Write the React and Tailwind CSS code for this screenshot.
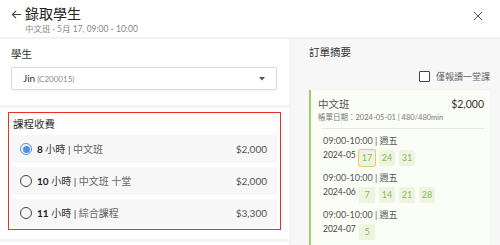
import React from "react";

const F = { fontFamily: "Lato, 'Noto Sans CJK TC', sans-serif" };

function Chip({ n, active }) {
  return (
    <div
      className={
        "w-[16px] h-[16px] flex items-center justify-center text-[9px] text-[#8bb85a] bg-[#edf5e1] rounded-[2px] " +
        (active ? "ring-1 ring-[#f2c46d]" : "")
      }
    >
      {n}
    </div>
  );
}

function Group({ month, days }) {
  return (
    <div className="flex flex-col">
      <div className="text-[9px] text-[#555] leading-[12px]">09:00-10:00 | 週五</div>
      <div className="flex items-start mt-[2px]">
        <div className="w-[36px] text-[8.5px] text-[#444] leading-[12px]">{month}</div>
        <div className="flex gap-[4px] mt-[1px]">
          {days.map((d, i) => (
            <Chip key={d} n={d} active={month === "2024-05" && i === 0} />
          ))}
        </div>
      </div>
    </div>
  );
}

function Option({ hours, name, price, checked }) {
  return (
    <div className="h-[28px] bg-[#f7f7f7] flex items-center px-[8px] rounded-[2px]">
      <div
        className={
          "w-[12px] h-[12px] rounded-full border flex items-center justify-center " +
          (checked ? "border-[#4a90e2]" : "border-[#444]")
        }
      >
        {checked && <div className="w-[7px] h-[7px] rounded-full bg-[#4a90e2]" />}
      </div>
      <div className="ml-[5px] text-[10px] text-[#333]">
        <span className="font-bold text-[#222]">{hours}</span>
        <span> 小時 | </span>
        <span className="text-[#666]">{name}</span>
      </div>
      <div className="ml-auto text-[10px] text-[#555] mr-[2px]">{price}</div>
    </div>
  );
}

export default function App() {
  return (
    <div style={F} className="w-[500px] h-[245px] overflow-hidden bg-white flex flex-col">
      <div className="h-[39px] shrink-0 border-b-[2px] border-[#f2f2f2] flex items-start pl-[11px] pr-[10px] pt-[5px]">
        <svg className="mt-[4px]" width="11" height="11" viewBox="0 0 12 12" fill="none" stroke="#444" strokeWidth="1.2">
          <path d="M11 6H1.5M5.5 2L1.5 6l4 4" />
        </svg>
        <div className="ml-[3px] flex flex-col">
          <div className="text-[14px] leading-[18px] text-[#222]">錄取學生</div>
          <div className="text-[8.5px] leading-[12px] text-[#888]">中文班 · 5月 17, 09:00 - 10:00</div>
        </div>
        <svg className="ml-auto mt-[6px] mr-[7px]" width="10" height="10" viewBox="0 0 10 10" stroke="#555" strokeWidth="1">
          <path d="M1 1l8 8M9 1L1 9" />
        </svg>
      </div>
      <div className="flex flex-1 min-h-0">
        <div className="w-[292px] shrink-0 flex flex-col border-r-[3px] border-[#f4f4f4]">
          <div className="px-[11px] pt-[8px] pb-[15px]">
            <div className="text-[10.5px] text-[#333] leading-[14px]">學生</div>
            <div className="mt-[6px] h-[23px] border border-[#d9d9d9] rounded-[2px] flex items-center px-[11px] shadow-[0_1px_1px_rgba(0,0,0,0.05)] w-[266px]">
              <span className="text-[10px] text-[#333]">Jin</span>
              <span className="text-[8px] text-[#888] ml-[2px]">(C200015)</span>
              <svg className="ml-auto" width="6" height="4" viewBox="0 0 6 4">
                <path d="M0 0h6L3 3.5z" fill="#555" />
              </svg>
            </div>
          </div>
          <div className="h-[3px] bg-[#f4f4f4]" />
          <div className="mx-[8px] mt-[4px] border border-[#e53222] pt-[4px] pb-[3px] px-[3px] h-[118px]">
            <div className="text-[10.5px] text-[#333] leading-[14px] ml-[1px]">課程收費</div>
            <div className="mt-[4px] flex flex-col gap-[4px] w-[265px]">
              <Option hours="8" name="中文班" price="$2,000" checked />
              <Option hours="10" name="中文班 十堂" price="$2,000" />
              <Option hours="11" name="綜合課程" price="$3,300" />
            </div>
          </div>
          <div className="mt-[9px] h-[3px] bg-[#f4f4f4]" />
        </div>
        <div className="flex-1 bg-[#f7f7f7] pl-[17px] pr-[10px] pt-[6px] flex flex-col">
          <div className="text-[10.5px] text-[#333] leading-[14px]">訂單摘要</div>
          <div className="mt-[11px] flex items-center justify-end">
            <div className="w-[11px] h-[11px] border border-[#444] rounded-[1px] bg-white" />
            <span className="ml-[6px] text-[9px] text-[#666]">僅報讀一堂課</span>
          </div>
          <div className="mt-[6px] bg-[#fbfdf7] border-l-[2px] border-[#9fcf6a] shadow-[0_0_1px_rgba(0,0,0,0.12)] pl-[7px] pr-[6px] pt-[7px] h-[160px]">
            <div className="flex items-center justify-between">
              <span className="text-[10.5px] text-[#555] leading-[14px]">中文班</span>
              <span className="text-[10.5px] text-[#333] leading-[14px]">$2,000</span>
            </div>
            <div className="text-[7.5px] text-[#777] leading-[11px] mt-[1px]">帳單日期：2024-05-01 | 480/480min</div>
            <div className="mt-[5px] ml-[3px] border-t border-[#e4e8de] pt-[6px] pl-[2px] flex flex-col gap-[6px]">
              <Group month="2024-05" days={[17, 24, 31]} />
              <Group month="2024-06" days={[7, 14, 21, 28]} />
              <Group month="2024-07" days={[5]} />
            </div>
          </div>
        </div>
      </div>
    </div>
  );
}
